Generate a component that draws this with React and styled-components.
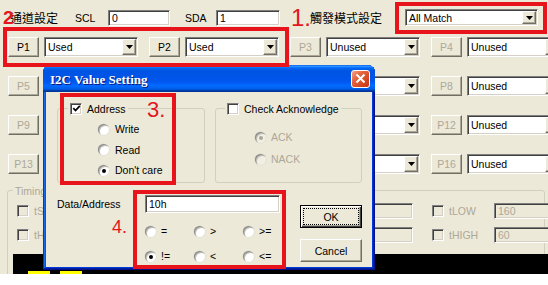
import React from 'react';
import styled, { createGlobalStyle, css } from 'styled-components';

const GlobalStyle = createGlobalStyle`
  html, body {
    margin: 0;
    padding: 0;
    background: #fff;
  }
  body {
    font-family: "Liberation Sans", "Noto Sans CJK TC", sans-serif;
    font-size: 10.5px;
    color: #000;
  }
  * {
    box-sizing: border-box;
  }
`;

// classic win32 bevels
const sunken = css`
  border: 1px solid;
  border-color: #7f7f7f #ffffff #ffffff #7f7f7f;
  box-shadow: inset 1px 1px 0 #404040, inset -1px -1px 0 #d4d0c8;
`;

const raised = css`
  border: 1px solid;
  border-color: #ffffff #716f64 #716f64 #ffffff;
  box-shadow: inset -1px -1px 0 #aca899;
  background: #ece9d8;
`;

const Screen = styled.div`
  position: relative;
  width: 548px;
  height: 285px;
  overflow: hidden;
  background: #fff;
`;

const Window = styled.div`
  height: 274px;
  background: #ece9d8;
  padding-top: 9px;
  overflow: hidden;
`;

const TopRow = styled.div`
  display: flex;
  align-items: center;
  height: 17px;
  padding-left: 10px;
`;

const Caption = styled.span`
  flex: none;
  width: ${({ $w }) => $w}px;
  margin-left: ${({ $ml }) => $ml || 0}px;
  font-size: ${({ $cjk }) => ($cjk ? '12px' : '10.5px')};
  white-space: nowrap;
  color: ${({ $dim }) => ($dim ? '#aca899' : '#000')};
`;

const Field = styled.div`
  ${sunken};
  flex: none;
  width: ${({ $w }) => $w}px;
  height: ${({ $h }) => $h || 16}px;
  line-height: ${({ $h }) => ($h || 16) - 2}px;
  padding-left: 3px;
  background: ${({ $disabled }) => ($disabled ? '#ece9d8' : '#fff')};
  color: ${({ $disabled }) => ($disabled ? '#aca899' : '#000')};
  white-space: nowrap;
  overflow: hidden;
`;

const ComboBox = styled.div`
  ${sunken};
  flex: none;
  display: flex;
  align-items: center;
  width: ${({ $w }) => $w}px;
  height: ${({ $h }) => $h}px;
  padding: 1px;
  background: #fff;
`;

const ComboText = styled.span`
  flex: 1;
  padding-left: 2px;
  white-space: nowrap;
  overflow: hidden;
`;

const ComboArrow = styled.span`
  ${raised};
  flex: none;
  display: flex;
  align-items: center;
  justify-content: center;
  width: 14px;
  height: 100%;
`;

const Combo = ({ w, h = 20, children }) => (
  <ComboBox $w={w} $h={h}>
    <ComboText>{children}</ComboText>
    <ComboArrow>
      <svg width="7" height="4" viewBox="0 0 7 4">
        <path d="M0 0 H7 L3.5 4 Z" fill="#000" />
      </svg>
    </ComboArrow>
  </ComboBox>
);

const PortGrid = styled.div`
  display: grid;
  grid-template-columns: repeat(4, 141px);
  row-gap: 19px;
  margin: 11px 0 0 8px;
`;

const Pair = styled.div`
  display: flex;
  gap: 5px;
`;

const PortButton = styled.button`
  ${raised};
  width: 31px;
  height: 20px;
  padding: 0;
  font: inherit;
  color: ${({ disabled }) => (disabled ? '#aca899' : '#000')};
`;

const GroupBox = styled.fieldset`
  margin: 0;
  padding: 0;
  min-width: 0;
  border: 1px solid #d0d0bf;
  border-radius: 3px;
`;

const GroupLegend = styled.legend`
  display: flex;
  align-items: center;
  gap: 5px;
  height: 13px;
  margin-left: ${({ $ml }) => $ml}px;
  padding: 0 2px;
  color: ${({ $dim }) => ($dim ? '#aca899' : '#000')};
`;

const TimingGroup = styled(GroupBox)`
  margin: 10px 3px 0 7px;
  padding: 0 0 4px 0;
`;

const TimingGrid = styled.div`
  display: grid;
  grid-template-columns: 274px 141px 1fr;
  row-gap: 8px;
  margin-top: 6px;
  padding-left: 9px;
`;

const TimingCell = styled.div`
  display: flex;
  align-items: center;
`;

const TimingLabel = styled.span`
  width: 45px;
  margin-left: 5px;
  color: #aca899;
  white-space: nowrap;
  overflow: hidden;
`;

const Scope = styled.div`
  display: flex;
  align-items: flex-end;
  gap: 10px;
  height: 21px;
  margin: 11px -4px 0 5px;
  padding-left: 15px;
  background: #000;
`;

const ScopeMark = styled.span`
  width: 22px;
  height: 4px;
  background: #ffff00;
`;

const CheckBox = styled.span`
  ${sunken};
  flex: none;
  display: inline-flex;
  align-items: center;
  justify-content: center;
  width: 12px;
  height: 12px;
  background: ${({ $disabled }) => ($disabled ? '#ece9d8' : '#fff')};
`;

const Check = ({ on, disabled }) => (
  <CheckBox $disabled={disabled}>
    {on && (
      <svg width="9" height="9" viewBox="0 0 9 9">
        <path d="M1.3 4.2 L3.5 6.5 L7.8 1.8" fill="none" stroke="#000" strokeWidth="1.8" />
      </svg>
    )}
  </CheckBox>
);

const RadioDot = styled.span`
  position: relative;
  flex: none;
  width: 11px;
  height: 11px;
  border-radius: 50%;
  background: ${({ $disabled }) => ($disabled ? '#f1efe4' : '#fff')};
  box-shadow: inset 1px 1px 0 #8d8d8d, inset 2px 2px 0 #c4c2b8, 0 0 0 0.5px #d8d6cc;

  &::after {
    content: '';
    display: ${({ $on }) => ($on ? 'block' : 'none')};
    position: absolute;
    left: 4px;
    top: 4px;
    width: 4px;
    height: 4px;
    border-radius: 50%;
    background: ${({ $disabled }) => ($disabled ? '#aca899' : '#000')};
  }
`;

const RadioRow = styled.div`
  display: flex;
  align-items: center;
  gap: ${({ $gap }) => $gap || 5}px;
  height: ${({ $h }) => $h || 14}px;
  color: ${({ $disabled }) => ($disabled ? '#aca899' : '#000')};
  white-space: nowrap;
`;

const Radio = ({ on, disabled, gap, h, children }) => (
  <RadioRow $disabled={disabled} $gap={gap} $h={h}>
    <RadioDot $on={on} $disabled={disabled} />
    <span>{children}</span>
  </RadioRow>
);

const RadioList = styled.div`
  display: flex;
  flex-direction: column;
  gap: ${({ $gap }) => $gap}px;
  padding: ${({ $top }) => $top}px 0 0 ${({ $left }) => $left}px;
`;

// dialog window
const Dialog = styled.div`
  position: absolute;
  left: 43px;
  top: 65px;
  width: 332px;
  height: 205px;
  display: flex;
  flex-direction: column;
  border-radius: 8px 8px 0 0;
  background: #0831d9;
  box-shadow: inset -1px -1px #00138c, inset 1px 1px #0831d9, inset -2px -2px #001ea0,
    inset 2px 2px #166aee, inset -3px -3px #003bda, inset 3px 3px #0855dd;
`;

const TitleBar = styled.div`
  display: flex;
  align-items: center;
  justify-content: space-between;
  height: 27px;
  padding: 0 5px 0 7px;
  border-radius: 7px 7px 0 0;
  background: linear-gradient(
    to bottom,
    #0058ee 0%, #3593ff 4%, #288eff 6%, #127dff 8%, #036ffc 10%, #0262ee 14%,
    #0057e5 20%, #0054e3 24%, #0055eb 56%, #005bf5 66%, #026afe 76%,
    #0062ef 86%, #0052d6 92%, #0040ab 94%, #003092 100%
  );
`;

const TitleText = styled.span`
  padding-top: 3px;
  font-family: "Liberation Serif", serif;
  font-weight: bold;
  font-size: 13px;
  color: #fff;
  text-shadow: 1px 1px 0 #0a1883;
`;

const CloseButton = styled.span`
  display: flex;
  align-items: center;
  justify-content: center;
  width: 19px;
  height: 18px;
  border: 1px solid #fff;
  border-radius: 3px;
  background: linear-gradient(135deg, #f3a38b 0%, #e5653f 35%, #d2441f 75%, #c03a1b 100%);
`;

const DialogBody = styled.div`
  flex: 1;
  margin: 0 3px 3px;
  padding: 10px 10px 0 11px;
  background: #ece9d8;
`;

const GroupRow = styled.div`
  display: flex;
  gap: 10px;
`;

const DialogGroup = styled(GroupBox)`
  width: ${({ $w }) => $w}px;
  height: 81px;
`;

const BottomArea = styled.div`
  display: grid;
  grid-template-columns: 88px 135px 1fr;
  margin-top: 12px;
`;

const FieldLabel = styled.span`
  line-height: 18px;
  white-space: nowrap;
`;

const OpGrid = styled.div`
  display: grid;
  grid-template-columns: repeat(3, 49px);
  grid-auto-rows: 16px;
  row-gap: 9px;
  margin-top: 10px;
`;

const ButtonColumn = styled.div`
  display: flex;
  flex-direction: column;
  align-items: flex-end;
  gap: 11px;
  padding-top: 10px;
`;

const DialogButton = styled.button`
  ${raised};
  display: flex;
  width: 62px;
  height: 23px;
  padding: 2px;
  font: inherit;
  color: #000;
  ${({ $default }) =>
    $default &&
    css`
      border-color: #000;
      box-shadow: inset 1px 1px 0 #fff, inset -1px -1px 0 #404040, inset -2px -2px 0 #aca899;
    `}
`;

const ButtonFace = styled.span`
  flex: 1;
  display: flex;
  align-items: center;
  justify-content: center;
  border: 1px dotted ${({ $focus }) => ($focus ? '#000' : 'transparent')};
`;

// red annotations drawn over the screenshot
const RedBox = styled.div`
  position: absolute;
  left: ${({ $x }) => $x}px;
  top: ${({ $y }) => $y}px;
  width: ${({ $w }) => $w}px;
  height: ${({ $h }) => $h}px;
  border: 4px solid #e8141b;
  pointer-events: none;
`;

const Tag = styled.span`
  position: absolute;
  left: ${({ $x }) => $x}px;
  top: ${({ $y }) => $y}px;
  font-family: "Liberation Sans", sans-serif;
  font-size: ${({ $size }) => $size}px;
  font-weight: ${({ $bold }) => ($bold ? 'bold' : 'normal')};
  line-height: 1;
  color: #e3161e;
`;

// ports in the middle columns sit under the dialog, their captions are not seen
const ports = Array.from({ length: 16 }, (_, i) => {
  const row = Math.floor(i / 4);
  const col = i % 4;
  const open = row === 0 || col === 3;
  return {
    id: i,
    name: open || col === 0 ? 'P' + (i + 1) : '',
    value: open ? (i < 2 ? 'Used' : 'Unused') : '',
    enabled: i < 2,
  };
});

const timing = [
  { label: 'tSU', value: '' },
  { label: '', value: '' },
  { label: 'tLOW', value: '160' },
  { label: 'tHD', value: '' },
  { label: '', value: '' },
  { label: 'tHIGH', value: '60' },
];

const ops = [
  { sign: '=', on: false },
  { sign: '>', on: false },
  { sign: '>=', on: false },
  { sign: '!=', on: true },
  { sign: '<', on: false },
  { sign: '<=', on: false },
];

const App = () => {
  return <Screen>
    <GlobalStyle />
    <Window>
      <TopRow>
        <Caption $w={65} $cjk>通道設定</Caption>
        <Caption $w={33}>SCL</Caption>
        <Field $w={62}>0</Field>
        <Caption $w={31} $ml={15}>SDA</Caption>
        <Field $w={64}>1</Field>
        <Caption $w={95} $ml={30} $cjk>觸發模式設定</Caption>
        <Combo w={133} h={17}>All Match</Combo>
      </TopRow>

      <PortGrid>
        {ports.map((p) => (
          <Pair key={p.id}>
            <PortButton disabled={!p.enabled}>{p.name}</PortButton>
            <Combo w={94}>{p.value}</Combo>
          </Pair>
        ))}
      </PortGrid>

      <TimingGroup>
        <GroupLegend $ml={5} $dim>Timing</GroupLegend>
        <TimingGrid>
          {timing.map((t, i) => (
            <TimingCell key={i}>
              <Check disabled />
              <TimingLabel>{t.label}</TimingLabel>
              <Field $w={60} $h={16} $disabled>{t.value}</Field>
            </TimingCell>
          ))}
        </TimingGrid>
        <Scope>
          <ScopeMark />
          <ScopeMark />
        </Scope>
      </TimingGroup>
    </Window>

    <Dialog>
      <TitleBar>
        <TitleText>I2C Value Setting</TitleText>
        <CloseButton>
          <svg width="11" height="11" viewBox="0 0 11 11">
            <path d="M1.5 1.5 L9.5 9.5 M9.5 1.5 L1.5 9.5" stroke="#fff" strokeWidth="2" />
          </svg>
        </CloseButton>
      </TitleBar>
      <DialogBody>
        <GroupRow>
          <DialogGroup $w={148}>
            <GroupLegend $ml={10}>
              <Check on />
              <span>Address</span>
            </GroupLegend>
            <RadioList $top={7} $gap={6.5} $left={40}>
              <Radio gap={6}>Write</Radio>
              <Radio gap={6}>Read</Radio>
              <Radio gap={6} on>Don't care</Radio>
            </RadioList>
          </DialogGroup>
          <DialogGroup $w={147}>
            <GroupLegend $ml={9}>
              <Check />
              <span>Check Acknowledge</span>
            </GroupLegend>
            <RadioList $top={15} $gap={8} $left={39}>
              <Radio disabled on>ACK</Radio>
              <Radio disabled>NACK</Radio>
            </RadioList>
          </DialogGroup>
        </GroupRow>

        <BottomArea>
          <FieldLabel>Data/Address</FieldLabel>
          <div>
            <Field $w={135} $h={18}>10h</Field>
            <OpGrid>
              {ops.map((o) => (
                <Radio key={o.sign} on={o.on} h={16}>{o.sign}</Radio>
              ))}
            </OpGrid>
          </div>
          <ButtonColumn>
            <DialogButton $default>
              <ButtonFace $focus>OK</ButtonFace>
            </DialogButton>
            <DialogButton>
              <ButtonFace>Cancel</ButtonFace>
            </DialogButton>
          </ButtonColumn>
        </BottomArea>
      </DialogBody>
    </Dialog>

    <RedBox $x={395} $y={2} $w={152} $h={32} />
    <RedBox $x={3} $y={27} $w={286} $h={40} />
    <RedBox $x={60} $y={93} $w={116} $h={92} />
    <RedBox $x={133} $y={190} $w={153} $h={79} />
    <Tag $x={3} $y={8} $size={19} $bold>2</Tag>
    <Tag $x={291} $y={6} $size={24}>1.</Tag>
    <Tag $x={147} $y={99} $size={22}>3.</Tag>
    <Tag $x={112} $y={218} $size={18}>4.</Tag>
  </Screen>;
};

export default App;
